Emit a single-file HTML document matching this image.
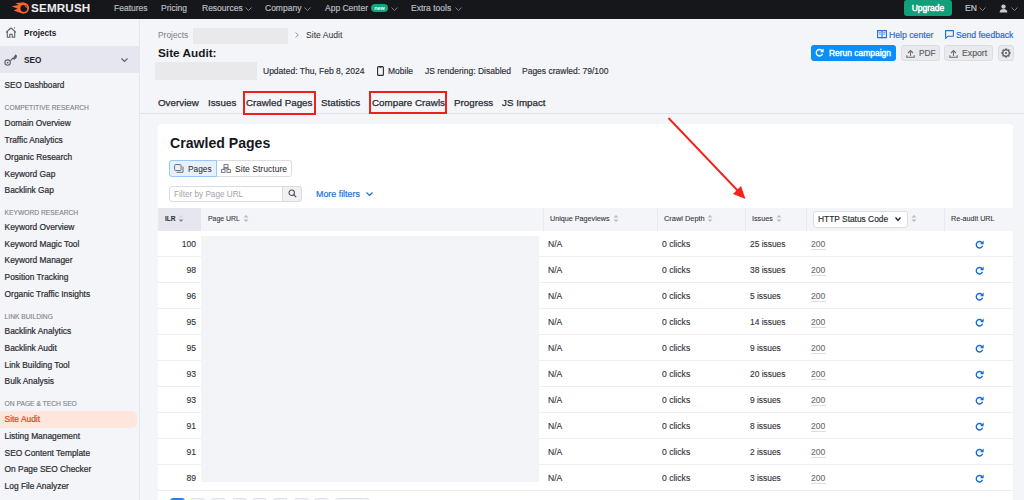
<!DOCTYPE html>
<html><head><meta charset="utf-8">
<style>
*{box-sizing:border-box;margin:0;padding:0}
html,body{width:1024px;height:500px;overflow:hidden}
body{font-family:"Liberation Sans",sans-serif;background:#f4f5f9;color:#1f2126;position:relative}
.a{position:absolute;white-space:nowrap}
svg.a{overflow:visible}
#top{position:absolute;left:0;top:0;width:1024px;height:19px;background:#16171b}
.n{color:#b9babf;font-size:8.5px;line-height:17.2px;top:0;-webkit-text-stroke:0.2px}
.si{font-size:8.4px;color:#2a2c31;line-height:12px;left:4.6px;-webkit-text-stroke:0.2px}
.sd{font-size:8.2px;color:#2a2c31;line-height:12px;left:4.6px;-webkit-text-stroke:0.2px}
.sh{font-size:6.7px;color:#7d8087;line-height:10px;left:4.6px;-webkit-text-stroke:0.1px}
.mt{top:65px;line-height:13px;font-size:8.5px;color:#2b2d33;-webkit-text-stroke:0.15px}
.tab{top:95.5px;line-height:13px;font-size:9.8px;color:#2a2c31;-webkit-text-stroke:0.25px #2a2c31}
.btn{top:45px;height:16px;border-radius:3px;font-size:8.6px;line-height:17px}
.th{top:213px;line-height:12px;font-size:7.2px;color:#35373d;-webkit-text-stroke:0.1px}
.td{line-height:12px;font-size:8.6px;color:#303237;-webkit-text-stroke:0.12px}
.st{color:#6b6e75}
.pg{top:498px;width:15px;height:10px;border:1px solid #dfe0e5;background:#f4f5f8;border-radius:3px}
</style></head><body>
<div id="top">
<svg class="a" style="left:11px;top:2px" width="19" height="12" viewBox="0 0 19 12">
<path d="M12.6 0.6 L4.6 1.1 L7.6 3.1 L0.6 4.3 L6.8 6.8 L2.6 8.4 L8.4 10.4 L12.6 11.6Z" fill="#ff642d"/>
<circle cx="12.6" cy="6.1" r="5.5" fill="#ff642d"/>
<circle cx="12.8" cy="6.4" r="3.4" fill="#16171b"/>
<path d="M13.4 3.6 A2.6 2.6 0 0 1 15.5 5.8" fill="none" stroke="#ff642d" stroke-width="1"/>
</svg>
<div class="a" style="left:31px;top:0;line-height:16.8px;font-size:10.6px;font-weight:bold;color:#eeeef0;letter-spacing:0.15px;transform:scaleX(1.1);transform-origin:0 0">SEMRUSH</div>
<div class="a n" style="left:114px">Features</div>
<div class="a n" style="left:161px">Pricing</div>
<div class="a n" style="left:202px">Resources</div><svg class="a" style="left:245px;top:7px" width="7" height="4" viewBox="0 0 7 4"><path d="M0.5 0.5 L3.5 3.5 L6.5 0.5" fill="none" stroke="#8a8c92" stroke-width="0.9"/></svg>
<div class="a n" style="left:265px">Company</div><svg class="a" style="left:304px;top:7px" width="7" height="4" viewBox="0 0 7 4"><path d="M0.5 0.5 L3.5 3.5 L6.5 0.5" fill="none" stroke="#8a8c92" stroke-width="0.9"/></svg>
<div class="a n" style="left:325px">App Center</div>
<div class="a" style="left:371px;top:4px;width:17px;height:8px;background:#13a37e;border-radius:4px;color:#e9fff6;font-size:5.5px;font-weight:bold;line-height:8px;text-align:center">new</div><svg class="a" style="left:391px;top:7px" width="7" height="4" viewBox="0 0 7 4"><path d="M0.5 0.5 L3.5 3.5 L6.5 0.5" fill="none" stroke="#8a8c92" stroke-width="0.9"/></svg>
<div class="a n" style="left:411px">Extra tools</div><svg class="a" style="left:455px;top:7px" width="7" height="4" viewBox="0 0 7 4"><path d="M0.5 0.5 L3.5 3.5 L6.5 0.5" fill="none" stroke="#8a8c92" stroke-width="0.9"/></svg>
<div class="a" style="left:904px;top:0;width:48px;height:16px;background:#0fa079;border-radius:3px;color:#fff;font-size:8.5px;-webkit-text-stroke:0.45px #fff;text-align:center;line-height:17px">Upgrade</div>
<div class="a n" style="left:965px;color:#c4c5c9">EN</div><svg class="a" style="left:979px;top:7px" width="7" height="4" viewBox="0 0 7 4"><path d="M0.5 0.5 L3.5 3.5 L6.5 0.5" fill="none" stroke="#8a8c92" stroke-width="0.9"/></svg>
<svg class="a" style="left:999px;top:4px" width="9" height="9" viewBox="0 0 9 9"><circle cx="4.5" cy="2.6" r="2.2" fill="#c9cace"/><path d="M0.6 8.6 C0.8 5.6 2.4 4.9 4.5 4.9 C6.6 4.9 8.2 5.6 8.4 8.6Z" fill="#c9cace"/></svg><svg class="a" style="left:1011px;top:7px" width="7" height="4" viewBox="0 0 7 4"><path d="M0.5 0.5 L3.5 3.5 L6.5 0.5" fill="none" stroke="#8a8c92" stroke-width="0.9"/></svg>
</div>
<div class="a" style="left:0;top:19px;width:139px;height:481px;background:#f4f5f9"></div>
<div class="a" style="left:139px;top:19px;width:1px;height:481px;background:#e6e7ec"></div>
<svg class="a" style="left:5px;top:27px" width="12" height="11" viewBox="0 0 12 11"><path d="M1 5.4 L6 1 L11 5.4 M2.3 4.5 V10.2 H4.8 V7.2 H7.2 V10.2 H9.7 V4.5" fill="none" stroke="#5d6067" stroke-width="1.1" stroke-linejoin="round"/><circle cx="9.6" cy="0.9" r="0.6" fill="#5d6067"/></svg>
<div class="a" style="left:24px;top:28px;line-height:12px;font-size:8.2px;font-weight:bold;color:#1f2126">Projects</div>
<div class="a" style="left:0;top:46px;width:139px;height:27px;background:#e6e7ee"></div>
<svg class="a" style="left:4px;top:53px" width="14" height="14" viewBox="0 0 14 14"><circle cx="3.6" cy="9.6" r="2.7" fill="none" stroke="#5d6067" stroke-width="1.1"/><circle cx="3.6" cy="9.6" r="0.9" fill="#5d6067"/><path d="M6.4 7.6 L9.2 5" stroke="#5d6067" stroke-width="1.2"/><path d="M8.6 5.6 L11.6 1.2 L12.9 2.4 L12.8 4.6 L10.2 7Z" fill="#5d6067"/></svg>
<div class="a" style="left:24px;top:55px;line-height:12px;font-size:8.2px;font-weight:bold;color:#1f2126">SEO</div>
<svg class="a" style="left:121px;top:58px" width="7" height="4" viewBox="0 0 7 4"><path d="M0.5 0.5 L3.5 3.5 L6.5 0.5" fill="none" stroke="#5d6067" stroke-width="1.1"/></svg>
<div class="a sd" style="top:80px">SEO Dashboard</div>
<div class="a sh" style="top:103px">COMPETITIVE RESEARCH</div>
<div class="a si" style="top:117px">Domain Overview</div>
<div class="a si" style="top:134px">Traffic Analytics</div>
<div class="a si" style="top:151px">Organic Research</div>
<div class="a si" style="top:168px">Keyword Gap</div>
<div class="a si" style="top:184px">Backlink Gap</div>
<div class="a sh" style="top:208px">KEYWORD RESEARCH</div>
<div class="a si" style="top:221px">Keyword Overview</div>
<div class="a si" style="top:238px">Keyword Magic Tool</div>
<div class="a si" style="top:254px">Keyword Manager</div>
<div class="a si" style="top:271px">Position Tracking</div>
<div class="a si" style="top:288px">Organic Traffic Insights</div>
<div class="a sh" style="top:312px">LINK BUILDING</div>
<div class="a si" style="top:325px">Backlink Analytics</div>
<div class="a si" style="top:342px">Backlink Audit</div>
<div class="a si" style="top:359px">Link Building Tool</div>
<div class="a si" style="top:375px">Bulk Analysis</div>
<div class="a sh" style="top:399px">ON PAGE &amp; TECH SEO</div>
<div class="a" style="left:0;top:411px;width:137px;height:17px;background:#ffe6dc;border-radius:0 5px 5px 0"></div>
<div class="a si" style="top:413px;color:#e2401b">Site Audit</div>
<div class="a si" style="top:430px">Listing Management</div>
<div class="a si" style="top:447px">SEO Content Template</div>
<div class="a si" style="top:463px">On Page SEO Checker</div>
<div class="a si" style="top:480px">Log File Analyzer</div>
<div class="a" style="left:158px;top:29px;line-height:12px;font-size:8.4px;color:#7a7d84">Projects</div>
<div class="a" style="left:193px;top:28px;width:95px;height:16px;background:#e9e9eb"></div>
<svg class="a" style="left:295px;top:32px" width="4" height="6" viewBox="0 0 4 6"><path d="M0.5 0.5 L3.3 3 L0.5 5.5" fill="none" stroke="#8d9096" stroke-width="0.9"/></svg>
<div class="a" style="left:306px;top:29px;line-height:12px;font-size:8.6px;color:#2b2d33">Site Audit</div>
<div class="a" style="left:158px;top:45px;line-height:16px;font-size:11.8px;font-weight:bold;color:#17181c">Site Audit:</div>
<div class="a" style="left:155px;top:62px;width:102px;height:18px;background:#e9e9eb"></div>
<div class="a mt" style="left:263px">Updated: Thu, Feb 8, 2024</div>
<svg class="a" style="left:377px;top:66px" width="7" height="10" viewBox="0 0 7 10"><rect x="0.6" y="0.6" width="5.8" height="8.8" rx="1" fill="none" stroke="#2b2d33" stroke-width="1.1"/><path d="M2.5 1.6 H4.5" stroke="#2b2d33" stroke-width="0.8"/></svg>
<div class="a mt" style="left:388px">Mobile</div>
<div class="a mt" style="left:425px">JS rendering: Disabled</div>
<div class="a mt" style="left:522px">Pages crawled: 79/100</div>
<div class="a tab" style="left:158px">Overview</div>
<div class="a tab" style="left:208px">Issues</div>
<div class="a tab" style="left:246px">Crawled Pages</div>
<div class="a tab" style="left:321px">Statistics</div>
<div class="a tab" style="left:372px">Compare Crawls</div>
<div class="a tab" style="left:454px">Progress</div>
<div class="a tab" style="left:502px">JS Impact</div>
<div class="a" style="left:140px;top:113px;width:884px;height:1px;background:#e2e3e8"></div>
<div class="a" style="left:243px;top:91px;width:73px;height:24px;border:2px solid #ee201a"></div>
<div class="a" style="left:369px;top:91px;width:78px;height:22.5px;border:2px solid #ee201a"></div>
<svg class="a" style="left:877px;top:30px" width="10" height="9" viewBox="0 0 10 9"><path d="M0.6 0.6 H4.4 Q5 0.6 5 1.4 Q5 0.6 5.6 0.6 H9.4 V7.6 H5.6 Q5 7.6 5 8.4 Q5 7.6 4.4 7.6 H0.6Z M5 1.4 V8.4" fill="none" stroke="#1f6fd6" stroke-width="1.1"/><path d="M1.8 2.6 H3.8 M1.8 4.2 H3.8 M6.2 2.6 H8.2 M6.2 4.2 H8.2" stroke="#1f6fd6" stroke-width="0.7"/></svg>
<div class="a" style="left:889px;top:29px;line-height:12px;font-size:8.7px;color:#1f6fd6;-webkit-text-stroke:0.2px">Help center</div>
<svg class="a" style="left:945px;top:30px" width="9" height="9" viewBox="0 0 9 9"><path d="M0.6 0.6 H8.4 V6.2 H3 L0.6 8.4Z" fill="none" stroke="#1f6fd6" stroke-width="1.1" stroke-linejoin="round"/></svg>
<div class="a" style="left:956px;top:29px;line-height:12px;font-size:8.6px;color:#1f6fd6;-webkit-text-stroke:0.2px">Send feedback</div>
<div class="a btn" style="left:811px;width:85px;background:#0a8ef7"></div>
<svg class="a" style="left:815px;top:48px" width="9" height="9" viewBox="0 0 10 10"><path d="M8.2 3.6 A3.6 3.6 0 1 0 8.4 6.4" fill="none" stroke="#ffffff" stroke-width="1.5"/><path d="M9.6 0.6 L9.6 4.6 L5.6 4.6Z" fill="#ffffff"/></svg>
<div class="a btn" style="left:829px;color:#fff;font-size:8.45px;-webkit-text-stroke:0.4px #fff">Rerun campaign</div>
<div class="a btn" style="left:901px;width:39px;background:#e9eaee;border:1px solid #dcdde2"></div>
<svg class="a" style="left:906px;top:49px" width="9" height="9" viewBox="0 0 9 9"><path d="M4.5 7 V1.5 M2 4 L4.5 1.5 L7 4 M0.8 6.2 V8.2 H8.2 V6.2" fill="none" stroke="#6b6e75" stroke-width="1.1"/></svg>
<div class="a btn" style="left:919px;color:#585b61;font-size:8.3px;-webkit-text-stroke:0.15px">PDF</div>
<div class="a btn" style="left:944px;width:49px;background:#e9eaee;border:1px solid #dcdde2"></div>
<svg class="a" style="left:949px;top:49px" width="9" height="9" viewBox="0 0 9 9"><path d="M4.5 7 V1.5 M2 4 L4.5 1.5 L7 4 M0.8 6.2 V8.2 H8.2 V6.2" fill="none" stroke="#6b6e75" stroke-width="1.1"/></svg>
<div class="a btn" style="left:962px;color:#585b61;font-size:8.7px;-webkit-text-stroke:0.15px">Export</div>
<div class="a btn" style="left:998px;width:16px;background:#e9eaee;border:1px solid #dcdde2"></div>
<svg class="a" style="left:1001px;top:48px" width="10" height="10" viewBox="0 0 10 10"><path d="M9.05 5.00 L8.97 5.26 L8.74 5.49 L8.43 5.68 L8.12 5.83 L7.86 5.97 L7.73 6.13 L7.71 6.34 L7.79 6.61 L7.91 6.94 L7.99 7.30 L7.99 7.62 L7.86 7.86 L7.62 7.99 L7.30 7.99 L6.94 7.91 L6.61 7.79 L6.34 7.71 L6.13 7.73 L5.97 7.86 L5.83 8.12 L5.68 8.43 L5.49 8.74 L5.26 8.97 L5.00 9.05 L4.74 8.97 L4.51 8.74 L4.32 8.43 L4.17 8.12 L4.03 7.86 L3.87 7.73 L3.66 7.71 L3.39 7.79 L3.06 7.91 L2.70 7.99 L2.38 7.99 L2.14 7.86 L2.01 7.62 L2.01 7.30 L2.09 6.94 L2.21 6.61 L2.29 6.34 L2.27 6.13 L2.14 5.97 L1.88 5.83 L1.57 5.68 L1.26 5.49 L1.03 5.26 L0.95 5.00 L1.03 4.74 L1.26 4.51 L1.57 4.32 L1.88 4.17 L2.14 4.03 L2.27 3.87 L2.29 3.66 L2.21 3.39 L2.09 3.06 L2.01 2.70 L2.01 2.38 L2.14 2.14 L2.38 2.01 L2.70 2.01 L3.06 2.09 L3.39 2.21 L3.66 2.29 L3.87 2.27 L4.03 2.14 L4.17 1.88 L4.32 1.57 L4.51 1.26 L4.74 1.03 L5.00 0.95 L5.26 1.03 L5.49 1.26 L5.68 1.57 L5.83 1.88 L5.97 2.14 L6.13 2.27 L6.34 2.29 L6.61 2.21 L6.94 2.09 L7.30 2.01 L7.62 2.01 L7.86 2.14 L7.99 2.38 L7.99 2.70 L7.91 3.06 L7.79 3.39 L7.71 3.66 L7.73 3.87 L7.86 4.03 L8.12 4.17 L8.43 4.32 L8.74 4.51 L8.97 4.74 L9.05 5.00Z" fill="none" stroke="#5d6067" stroke-width="1.3" stroke-linejoin="round"/><circle cx="5" cy="5" r="1.1" fill="#5d6067"/></svg>
<div class="a" style="left:158px;top:124px;width:855px;height:400px;background:#fff;border-radius:4px"></div>
<div class="a" style="left:170px;top:133px;line-height:20px;font-size:14.1px;font-weight:bold;color:#16171b">Crawled Pages</div>
<div class="a" style="left:169px;top:160px;width:123px;height:17px;border:1px solid #dcdde3;border-radius:3px"></div>
<div class="a" style="left:169px;top:160px;width:48px;height:17px;border:1px solid #98c8f8;background:#e6f1fc;border-radius:3px 0 0 3px"></div>
<svg class="a" style="left:174px;top:164px" width="10" height="9" viewBox="0 0 10 9"><rect x="0.6" y="0.6" width="6.5" height="6" rx="1" fill="none" stroke="#6b6e75" stroke-width="1"/><path d="M2.6 8.3 H9 V2.6" fill="none" stroke="#6b6e75" stroke-width="1"/></svg>
<div class="a" style="left:188px;top:162.5px;line-height:13px;font-size:8.3px;color:#26282d">Pages</div>
<svg class="a" style="left:221px;top:164px" width="10" height="9" viewBox="0 0 10 9"><rect x="3" y="0.6" width="4" height="3" fill="none" stroke="#6b6e75" stroke-width="0.9"/><rect x="0.6" y="5.6" width="3.4" height="2.8" fill="none" stroke="#6b6e75" stroke-width="0.9"/><rect x="6" y="5.6" width="3.4" height="2.8" fill="none" stroke="#6b6e75" stroke-width="0.9"/><path d="M5 3.6 V4.6 H2.3 V5.6 M5 4.6 H7.7 V5.6" fill="none" stroke="#6b6e75" stroke-width="0.8"/></svg>
<div class="a" style="left:235px;top:162.5px;line-height:13px;font-size:8.6px;color:#26282d">Site Structure</div>
<div class="a" style="left:169px;top:185.5px;width:133px;height:16.5px;border:1px solid #dcdde3;border-radius:3px"></div>
<div class="a" style="left:282px;top:185.5px;width:20px;height:16.5px;border:1px solid #dcdde3;background:#f0f1f4;border-radius:0 3px 3px 0"></div>
<svg class="a" style="left:288px;top:189px" width="9" height="9" viewBox="0 0 9 9"><circle cx="3.7" cy="3.7" r="2.7" fill="none" stroke="#4a4d53" stroke-width="1.05"/><path d="M5.7 5.7 L8.2 8.2" stroke="#4a4d53" stroke-width="1.2"/></svg>
<div class="a" style="left:174px;top:188px;line-height:13px;font-size:8.2px;color:#a3a6ac">Filter by Page URL</div>
<div class="a" style="left:316px;top:188px;line-height:13px;font-size:8.9px;color:#1f6fd6;-webkit-text-stroke:0.2px">More filters</div>
<svg class="a" style="left:366px;top:192px" width="7" height="4" viewBox="0 0 7 4"><path d="M0.5 0.5 L3.5 3.5 L6.5 0.5" fill="none" stroke="#1f6fd6" stroke-width="1.2"/></svg>
<svg class="a" style="left:0;top:0" width="1024" height="500" viewBox="0 0 1024 500"><path d="M668.5 118 L739 192" stroke="#f4221b" stroke-width="1.9"/><path d="M745.5 199 L733 194 L741 186Z" fill="#f4221b"/></svg>
<div class="a" style="left:158px;top:208px;width:855px;height:23px;background:#f4f5f9"></div>
<div class="a" style="left:158px;top:208px;width:43px;height:23px;background:#e6e7ee"></div>
<div class="a" style="left:543px;top:208px;width:1px;height:23px;background:#e9eaef"></div>
<div class="a" style="left:657px;top:208px;width:1px;height:23px;background:#e9eaef"></div>
<div class="a" style="left:745px;top:208px;width:1px;height:23px;background:#e9eaef"></div>
<div class="a" style="left:806px;top:208px;width:1px;height:23px;background:#e9eaef"></div>
<div class="a" style="left:944px;top:208px;width:1px;height:23px;background:#e9eaef"></div>
<div class="a th" style="left:165px;font-weight:bold;font-size:6.6px">ILR</div><svg class="a" style="left:178px;top:214px" width="6" height="9" viewBox="0 0 6 9"><path d="M0.5 3.5 L3 1 L5.5 3.5Z" fill="#d4d6dc"/><path d="M0.5 5.5 L3 8 L5.5 5.5Z" fill="#85888f"/></svg>
<div class="a th" style="left:208px;font-size:6.9px">Page URL</div><svg class="a" style="left:243px;top:214px" width="6" height="9" viewBox="0 0 6 9"><path d="M0.5 3.5 L3 1 L5.5 3.5Z" fill="#b9bbc1"/><path d="M0.5 5.5 L3 8 L5.5 5.5Z" fill="#b9bbc1"/></svg>
<div class="a th" style="left:550px;font-size:7.2px">Unique Pageviews</div><svg class="a" style="left:613px;top:214px" width="6" height="9" viewBox="0 0 6 9"><path d="M0.5 3.5 L3 1 L5.5 3.5Z" fill="#b9bbc1"/><path d="M0.5 5.5 L3 8 L5.5 5.5Z" fill="#b9bbc1"/></svg>
<div class="a th" style="left:664px;font-size:7.4px">Crawl Depth</div><svg class="a" style="left:707px;top:214px" width="6" height="9" viewBox="0 0 6 9"><path d="M0.5 3.5 L3 1 L5.5 3.5Z" fill="#b9bbc1"/><path d="M0.5 5.5 L3 8 L5.5 5.5Z" fill="#b9bbc1"/></svg>
<div class="a th" style="left:752px;font-size:7.2px">Issues</div><svg class="a" style="left:776px;top:214px" width="6" height="9" viewBox="0 0 6 9"><path d="M0.5 3.5 L3 1 L5.5 3.5Z" fill="#b9bbc1"/><path d="M0.5 5.5 L3 8 L5.5 5.5Z" fill="#b9bbc1"/></svg>
<div class="a" style="left:813px;top:211px;width:95px;height:17px;background:#fff;border:1px solid #dcdde3;border-radius:3px"></div>
<div class="a" style="left:818px;top:213px;line-height:13px;font-size:8.4px;color:#26282d;-webkit-text-stroke:0.15px">HTTP Status Code</div>
<svg class="a" style="left:895px;top:217px" width="6" height="4" viewBox="0 0 6 4"><path d="M0.5 0.5 L3.0 3.5 L5.5 0.5" fill="none" stroke="#26282d" stroke-width="1.4"/></svg>
<svg class="a" style="left:911px;top:214px" width="6" height="9" viewBox="0 0 6 9"><path d="M0.5 3.5 L3 1 L5.5 3.5Z" fill="#b9bbc1"/><path d="M0.5 5.5 L3 8 L5.5 5.5Z" fill="#b9bbc1"/></svg>
<div class="a th" style="left:951px;font-size:7.2px">Re-audit URL</div>
<div class="a" style="left:158px;top:256px;width:855px;height:1px;background:#eeeff3"></div>
<div class="a td" style="left:158px;width:38px;text-align:right;top:237.5px">100</div>
<div class="a td" style="left:548px;top:237.5px">N/A</div>
<div class="a td" style="left:662px;top:237.5px">0 clicks</div>
<div class="a td" style="left:750px;top:237.5px;font-size:8.4px">25 issues</div>
<div class="a td st" style="left:811px;top:237.5px">200</div>
<div class="a" style="left:811px;top:249px;width:15px;height:1px;background:#dcdee2"></div>
<svg class="a" style="left:975px;top:240px" width="9" height="9" viewBox="0 0 10 10"><path d="M8.2 3.6 A3.6 3.6 0 1 0 8.4 6.4" fill="none" stroke="#1769d6" stroke-width="1.5"/><path d="M9.6 0.6 L9.6 4.6 L5.6 4.6Z" fill="#1769d6"/></svg>
<div class="a" style="left:158px;top:282px;width:855px;height:1px;background:#eeeff3"></div>
<div class="a td" style="left:158px;width:38px;text-align:right;top:263.5px">98</div>
<div class="a td" style="left:548px;top:263.5px">N/A</div>
<div class="a td" style="left:662px;top:263.5px">0 clicks</div>
<div class="a td" style="left:750px;top:263.5px;font-size:8.4px">38 issues</div>
<div class="a td st" style="left:811px;top:263.5px">200</div>
<div class="a" style="left:811px;top:275px;width:15px;height:1px;background:#dcdee2"></div>
<svg class="a" style="left:975px;top:266px" width="9" height="9" viewBox="0 0 10 10"><path d="M8.2 3.6 A3.6 3.6 0 1 0 8.4 6.4" fill="none" stroke="#1769d6" stroke-width="1.5"/><path d="M9.6 0.6 L9.6 4.6 L5.6 4.6Z" fill="#1769d6"/></svg>
<div class="a" style="left:158px;top:308px;width:855px;height:1px;background:#eeeff3"></div>
<div class="a td" style="left:158px;width:38px;text-align:right;top:289.5px">96</div>
<div class="a td" style="left:548px;top:289.5px">N/A</div>
<div class="a td" style="left:662px;top:289.5px">0 clicks</div>
<div class="a td" style="left:750px;top:289.5px;font-size:8.4px">5 issues</div>
<div class="a td st" style="left:811px;top:289.5px">200</div>
<div class="a" style="left:811px;top:301px;width:15px;height:1px;background:#dcdee2"></div>
<svg class="a" style="left:975px;top:292px" width="9" height="9" viewBox="0 0 10 10"><path d="M8.2 3.6 A3.6 3.6 0 1 0 8.4 6.4" fill="none" stroke="#1769d6" stroke-width="1.5"/><path d="M9.6 0.6 L9.6 4.6 L5.6 4.6Z" fill="#1769d6"/></svg>
<div class="a" style="left:158px;top:334px;width:855px;height:1px;background:#eeeff3"></div>
<div class="a td" style="left:158px;width:38px;text-align:right;top:315.5px">95</div>
<div class="a td" style="left:548px;top:315.5px">N/A</div>
<div class="a td" style="left:662px;top:315.5px">0 clicks</div>
<div class="a td" style="left:750px;top:315.5px;font-size:8.4px">14 issues</div>
<div class="a td st" style="left:811px;top:315.5px">200</div>
<div class="a" style="left:811px;top:327px;width:15px;height:1px;background:#dcdee2"></div>
<svg class="a" style="left:975px;top:318px" width="9" height="9" viewBox="0 0 10 10"><path d="M8.2 3.6 A3.6 3.6 0 1 0 8.4 6.4" fill="none" stroke="#1769d6" stroke-width="1.5"/><path d="M9.6 0.6 L9.6 4.6 L5.6 4.6Z" fill="#1769d6"/></svg>
<div class="a" style="left:158px;top:360px;width:855px;height:1px;background:#eeeff3"></div>
<div class="a td" style="left:158px;width:38px;text-align:right;top:341.5px">95</div>
<div class="a td" style="left:548px;top:341.5px">N/A</div>
<div class="a td" style="left:662px;top:341.5px">0 clicks</div>
<div class="a td" style="left:750px;top:341.5px;font-size:8.4px">9 issues</div>
<div class="a td st" style="left:811px;top:341.5px">200</div>
<div class="a" style="left:811px;top:353px;width:15px;height:1px;background:#dcdee2"></div>
<svg class="a" style="left:975px;top:344px" width="9" height="9" viewBox="0 0 10 10"><path d="M8.2 3.6 A3.6 3.6 0 1 0 8.4 6.4" fill="none" stroke="#1769d6" stroke-width="1.5"/><path d="M9.6 0.6 L9.6 4.6 L5.6 4.6Z" fill="#1769d6"/></svg>
<div class="a" style="left:158px;top:386px;width:855px;height:1px;background:#eeeff3"></div>
<div class="a td" style="left:158px;width:38px;text-align:right;top:367.5px">93</div>
<div class="a td" style="left:548px;top:367.5px">N/A</div>
<div class="a td" style="left:662px;top:367.5px">0 clicks</div>
<div class="a td" style="left:750px;top:367.5px;font-size:8.4px">20 issues</div>
<div class="a td st" style="left:811px;top:367.5px">200</div>
<div class="a" style="left:811px;top:379px;width:15px;height:1px;background:#dcdee2"></div>
<svg class="a" style="left:975px;top:370px" width="9" height="9" viewBox="0 0 10 10"><path d="M8.2 3.6 A3.6 3.6 0 1 0 8.4 6.4" fill="none" stroke="#1769d6" stroke-width="1.5"/><path d="M9.6 0.6 L9.6 4.6 L5.6 4.6Z" fill="#1769d6"/></svg>
<div class="a" style="left:158px;top:412px;width:855px;height:1px;background:#eeeff3"></div>
<div class="a td" style="left:158px;width:38px;text-align:right;top:393.5px">93</div>
<div class="a td" style="left:548px;top:393.5px">N/A</div>
<div class="a td" style="left:662px;top:393.5px">0 clicks</div>
<div class="a td" style="left:750px;top:393.5px;font-size:8.4px">9 issues</div>
<div class="a td st" style="left:811px;top:393.5px">200</div>
<div class="a" style="left:811px;top:405px;width:15px;height:1px;background:#dcdee2"></div>
<svg class="a" style="left:975px;top:396px" width="9" height="9" viewBox="0 0 10 10"><path d="M8.2 3.6 A3.6 3.6 0 1 0 8.4 6.4" fill="none" stroke="#1769d6" stroke-width="1.5"/><path d="M9.6 0.6 L9.6 4.6 L5.6 4.6Z" fill="#1769d6"/></svg>
<div class="a" style="left:158px;top:438px;width:855px;height:1px;background:#eeeff3"></div>
<div class="a td" style="left:158px;width:38px;text-align:right;top:419.5px">91</div>
<div class="a td" style="left:548px;top:419.5px">N/A</div>
<div class="a td" style="left:662px;top:419.5px">0 clicks</div>
<div class="a td" style="left:750px;top:419.5px;font-size:8.4px">8 issues</div>
<div class="a td st" style="left:811px;top:419.5px">200</div>
<div class="a" style="left:811px;top:431px;width:15px;height:1px;background:#dcdee2"></div>
<svg class="a" style="left:975px;top:422px" width="9" height="9" viewBox="0 0 10 10"><path d="M8.2 3.6 A3.6 3.6 0 1 0 8.4 6.4" fill="none" stroke="#1769d6" stroke-width="1.5"/><path d="M9.6 0.6 L9.6 4.6 L5.6 4.6Z" fill="#1769d6"/></svg>
<div class="a" style="left:158px;top:464px;width:855px;height:1px;background:#eeeff3"></div>
<div class="a td" style="left:158px;width:38px;text-align:right;top:445.5px">91</div>
<div class="a td" style="left:548px;top:445.5px">N/A</div>
<div class="a td" style="left:662px;top:445.5px">0 clicks</div>
<div class="a td" style="left:750px;top:445.5px;font-size:8.4px">2 issues</div>
<div class="a td st" style="left:811px;top:445.5px">200</div>
<div class="a" style="left:811px;top:457px;width:15px;height:1px;background:#dcdee2"></div>
<svg class="a" style="left:975px;top:448px" width="9" height="9" viewBox="0 0 10 10"><path d="M8.2 3.6 A3.6 3.6 0 1 0 8.4 6.4" fill="none" stroke="#1769d6" stroke-width="1.5"/><path d="M9.6 0.6 L9.6 4.6 L5.6 4.6Z" fill="#1769d6"/></svg>
<div class="a" style="left:158px;top:490px;width:855px;height:1px;background:#eeeff3"></div>
<div class="a td" style="left:158px;width:38px;text-align:right;top:471.5px">89</div>
<div class="a td" style="left:548px;top:471.5px">N/A</div>
<div class="a td" style="left:662px;top:471.5px">0 clicks</div>
<div class="a td" style="left:750px;top:471.5px;font-size:8.4px">3 issues</div>
<div class="a td st" style="left:811px;top:471.5px">200</div>
<div class="a" style="left:811px;top:483px;width:15px;height:1px;background:#dcdee2"></div>
<svg class="a" style="left:975px;top:474px" width="9" height="9" viewBox="0 0 10 10"><path d="M8.2 3.6 A3.6 3.6 0 1 0 8.4 6.4" fill="none" stroke="#1769d6" stroke-width="1.5"/><path d="M9.6 0.6 L9.6 4.6 L5.6 4.6Z" fill="#1769d6"/></svg>
<div class="a" style="left:201px;top:236px;width:338px;height:246px;background:#f3f4f8"></div>
<div class="a pg" style="left:170px;background:#1a86f0;border-color:#1a86f0"></div>
<div class="a pg" style="left:190px"></div>
<div class="a pg" style="left:211px"></div>
<div class="a pg" style="left:232px"></div>
<div class="a pg" style="left:252px"></div>
<div class="a pg" style="left:273px"></div>
<div class="a pg" style="left:294px"></div>
<div class="a pg" style="left:314px"></div>
<div class="a pg" style="left:335px;width:35px"></div>
</body></html>
